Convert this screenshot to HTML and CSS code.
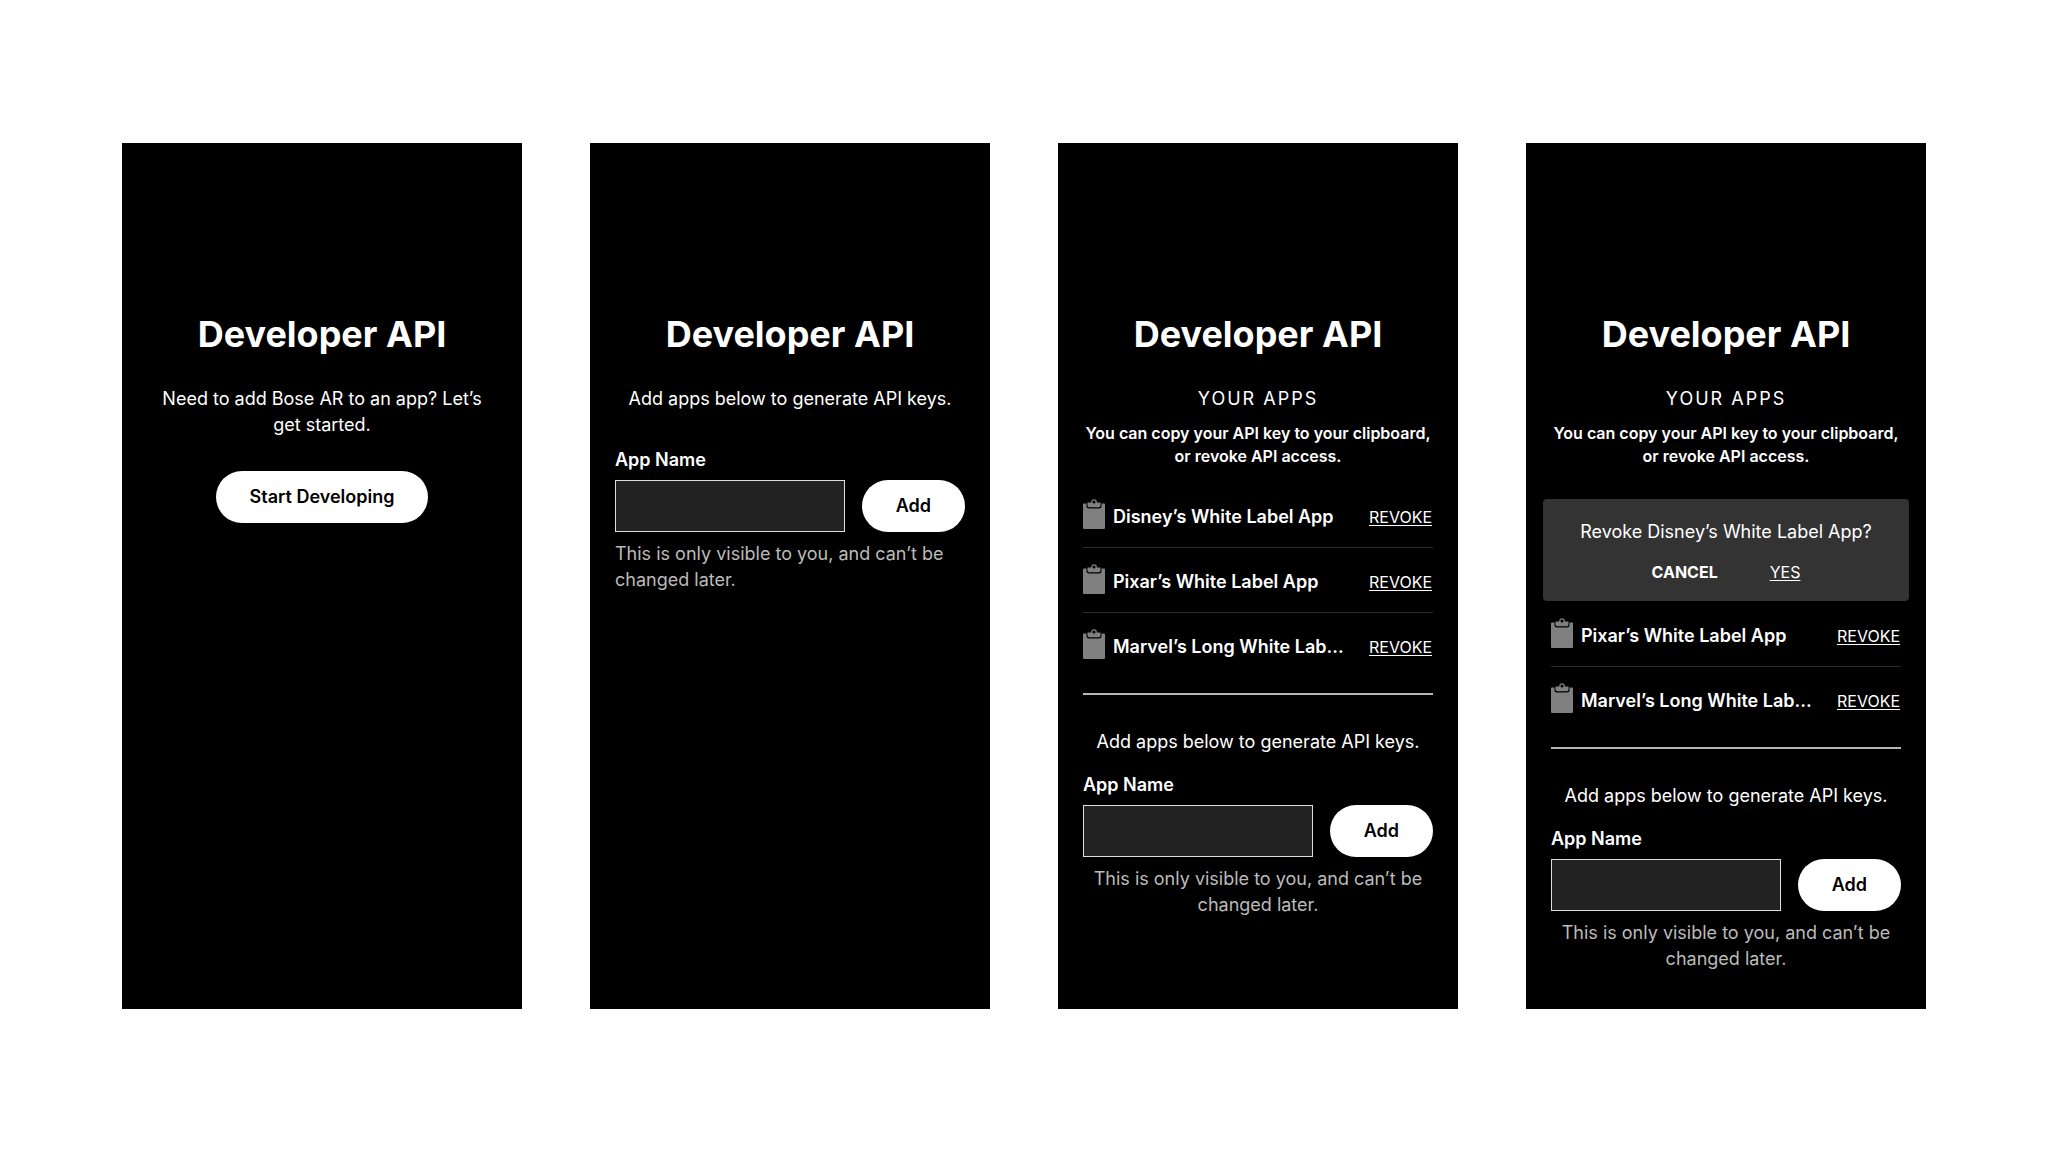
FILE: index.html
```html
<!DOCTYPE html>
<html lang="en">
<head>
    <meta charset="UTF-8">
    <meta name="viewport" content="width=device-width, initial-scale=1.0">
    <title>Developer API</title>
    <link rel="stylesheet" href="styles.css">
</head>
<body>
    <!-- clipboard icon, shared by every app row -->
    <svg class="sprite" aria-hidden="true">
        <symbol id="clipboard" viewBox="0 0 22 30">
            <path fill="#808080" d="M1 4.500h2.500v2.500a2.500 2.500 0 0 0 2.500 2.500h10a2.500 2.500 0 0 0 2.500-2.500V4.500H21a1 1 0 0 1 1 1v23.500a1 1 0 0 1-1 1H1a1 1 0 0 1-1-1V5.500a1 1 0 0 1 1-1z"/>
            <path fill="#808080" d="M4.500 3.500h13v3a1.800 1.800 0 0 1-1.800 1.800H6.300A1.800 1.800 0 0 1 4.500 6.500z"/>
            <circle cx="11" cy="3" r="2.200" fill="#000" stroke="#808080" stroke-width="1.300"/>
        </symbol>
    </svg>

    <main class="screens">
        <section class="screen">
            <h1>Developer API</h1>
            <p class="text">Need to add Bose AR to an app? Let’s get started.</p>
            <button class="button start" type="button">Start Developing</button>
        </section>

        <section class="screen">
            <h1>Developer API</h1>
            <p class="text">Add apps below to generate API keys.</p>
            <form class="app-form first">
                <label for="name-1">App Name</label>
                <div class="field">
                    <input type="text" id="name-1">
                    <button class="button" type="button">Add</button>
                </div>
                <p class="hint left">This is only visible to you, and can’t be changed later.</p>
            </form>
        </section>

        <section class="screen">
            <h1>Developer API</h1>
            <h2>Your Apps</h2>
            <p class="note">You can copy your API key to your clipboard, or revoke API access.</p>
            <ul class="apps">
                <li class="app">
                    <button class="copy" type="button" aria-label="Copy API key"><svg><use href="#clipboard"/></svg></button>
                    <span class="name">Disney’s White Label App</span>
                    <button class="link" type="button">REVOKE</button>
                </li>
                <li class="app">
                    <button class="copy" type="button" aria-label="Copy API key"><svg><use href="#clipboard"/></svg></button>
                    <span class="name">Pixar’s White Label App</span>
                    <button class="link" type="button">REVOKE</button>
                </li>
                <li class="app">
                    <button class="copy" type="button" aria-label="Copy API key"><svg><use href="#clipboard"/></svg></button>
                    <span class="name">Marvel’s Long White Lab...</span>
                    <button class="link" type="button">REVOKE</button>
                </li>
            </ul>
            <p class="text">Add apps below to generate API keys.</p>
            <form class="app-form">
                <label for="name-2">App Name</label>
                <div class="field">
                    <input type="text" id="name-2">
                    <button class="button" type="button">Add</button>
                </div>
                <p class="hint">This is only visible to you, and can’t be changed later.</p>
            </form>
        </section>

        <section class="screen">
            <h1>Developer API</h1>
            <h2>Your Apps</h2>
            <p class="note">You can copy your API key to your clipboard, or revoke API access.</p>
            <ul class="apps">
                <li class="confirm">
                    <p>Revoke Disney’s White Label App?</p>
                    <div class="actions">
                        <button class="link cancel" type="button">CANCEL</button>
                        <button class="link" type="button">YES</button>
                    </div>
                </li>
                <li class="app">
                    <button class="copy" type="button" aria-label="Copy API key"><svg><use href="#clipboard"/></svg></button>
                    <span class="name">Pixar’s White Label App</span>
                    <button class="link" type="button">REVOKE</button>
                </li>
                <li class="app">
                    <button class="copy" type="button" aria-label="Copy API key"><svg><use href="#clipboard"/></svg></button>
                    <span class="name">Marvel’s Long White Lab...</span>
                    <button class="link" type="button">REVOKE</button>
                </li>
            </ul>
            <p class="text">Add apps below to generate API keys.</p>
            <form class="app-form">
                <label for="name-3">App Name</label>
                <div class="field">
                    <input type="text" id="name-3">
                    <button class="button" type="button">Add</button>
                </div>
                <p class="hint">This is only visible to you, and can’t be changed later.</p>
            </form>
        </section>
    </main>
</body>
</html>
```
FILE: styles.css
```css
* {
    box-sizing: border-box;
}
body {
    margin: 0;
    background: #fff;
    color: #fff;
    font-family: Inter, 'Liberation Sans', sans-serif;
    font-size: 18px;
    line-height: 26px;
}
h1, h2, p, ul {
    margin: 0;
    padding: 0;
}
button, input {
    font: inherit;
    color: inherit;
}
button {
    border: none;
    padding: 0;
    background: none;
    cursor: pointer;
}
.sprite {
    display: none;
}
.screens {
    display: grid;
    grid-template-columns: repeat(auto-fit, minmax(360px, 1fr));
    gap: 68px;
    min-height: 100vh;
    padding: 143px 122px;
}
.screen {
    display: flex;
    flex-direction: column;
    padding: 169px 25px 35px;
    background: #000;
    text-align: center;
}
h1 {
    margin-bottom: 30px;
    font-size: 36px;
    line-height: 44px;
    font-weight: 700;
}
h2 {
    margin-bottom: 10px;
    font-size: 18px;
    font-weight: 400;
    letter-spacing: 2px;
    text-transform: uppercase;
}
.text {
    padding: 0 8px;
}
.note {
    font-size: 16px;
    line-height: 23px;
    font-weight: 600;
}

/* buttons */
.button {
    height: 52px;
    padding: 0 34px;
    border-radius: 26px;
    background: #fff;
    color: #000;
    font-weight: 600;
}
.start {
    align-self: center;
    margin-top: 33px;
}
.link {
    font-size: 16px;
    line-height: 24px;
    text-decoration: underline;
    text-underline-offset: 2px;
}
.cancel {
    font-weight: 700;
    text-decoration: none;
}

/* app list */
.apps {
    margin: 15px 0 34px;
    padding-bottom: 15px;
    border-bottom: 2px solid #b5b5b5;
    list-style: none;
}
.app {
    display: flex;
    align-items: flex-end;
    gap: 8px;
    height: 65px;
    padding: 0 1px 18px 0;
    border-bottom: 1px solid #2b2b2b;
}
.app:last-child {
    border-bottom-color: transparent;
}
.copy, .copy svg {
    display: block;
    width: 22px;
    height: 30px;
}
.name {
    flex: 1;
    min-width: 0;
    overflow: hidden;
    text-overflow: ellipsis;
    white-space: nowrap;
    line-height: 24px;
    font-weight: 600;
    text-align: left;
}
.confirm {
    margin: 16px -8px 1px;
    padding: 20px 16px 17px;
    border-radius: 4px;
    background: #333;
}
.actions {
    display: flex;
    justify-content: center;
    gap: 52px;
    margin-top: 15px;
}

/* add app form */
.app-form {
    margin-top: 17px;
}
.app-form.first {
    margin-top: 35px;
}
.app-form label {
    display: block;
    margin-bottom: 7px;
    font-weight: 600;
    text-align: left;
}
.field {
    display: flex;
    gap: 17px;
}
.field input {
    flex: 1;
    min-width: 0;
    height: 52px;
    padding: 0 12px;
    border: 1px solid #ddd;
    border-radius: 0;
    background: #222;
}
.hint {
    margin-top: 9px;
    color: #bbb;
}
.hint.left {
    text-align: left;
}
```
